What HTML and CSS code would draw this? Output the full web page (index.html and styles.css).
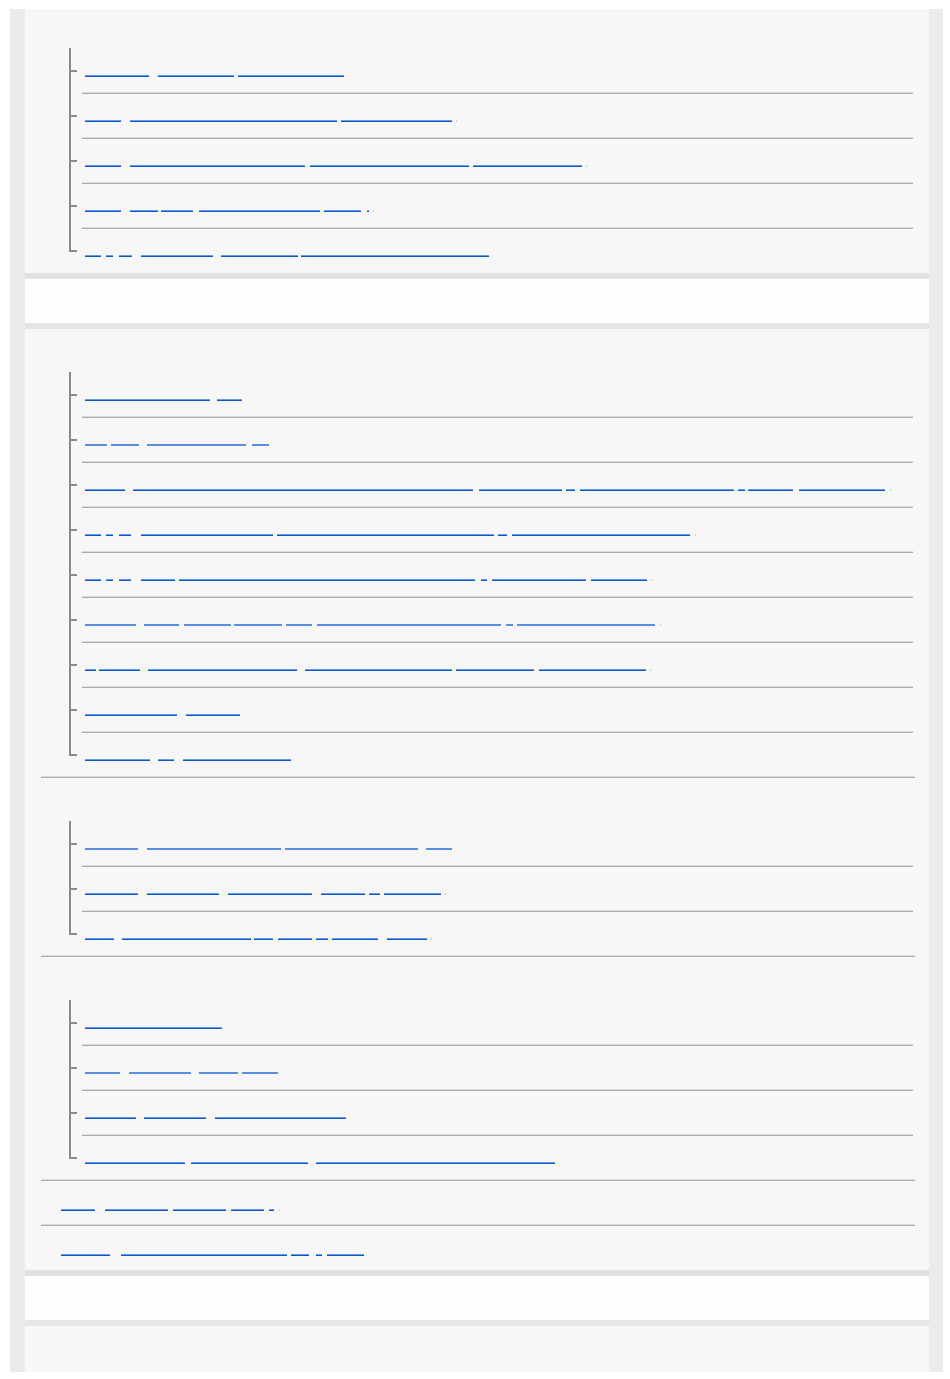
FILE: index.html
```html
<!DOCTYPE html>
<html lang="en">
<head>
<meta charset="utf-8">
<title>Help Guide</title>
<link rel="stylesheet" href="styles.css">
</head>
<body>
<div class="frame">

  <section class="sec sec-first">
    <ul class="top">
      <li class="grp grp-first">
        <div class="gh">Shooting settings</div>
        <ul class="tree">
          <li><a class="lk" href="#"><span class="s" style="width:64px">Focus</span><span class="s g9" style="width:76px">Mode</span><span class="s g4" style="width:106px">Settings</span></a></li>
          <li><a class="lk" href="#"><span class="s" style="width:36px">AF</span><span class="s g9" style="width:207px">Tracking sensitivity</span><span class="s g4" style="width:111px">Settings</span><span class="s g4 dot">.</span></a></li>
          <li><a class="lk" href="#"><span class="s" style="width:36px">Face</span><span class="s g9" style="width:175px">Detection Priority</span><span class="s g5" style="width:159px">in AF and MF</span><span class="s g4" style="width:109px">Settings</span><span class="s g4 dot">.</span></a></li>
          <li><a class="lk" href="#"><span class="s" style="width:36px">Eye</span><span class="s g9" style="width:28px">AF</span><span class="s g3" style="width:32px">Set</span><span class="s g6" style="width:121px">Subject Detection</span><span class="s g4" style="width:37px">Area</span><span class="s g6" style="width:2px">|</span><span class="s g4 dot">.</span></a></li>
          <li><a class="lk" href="#"><span class="s" style="width:16px">1</span><span class="s g5" style="width:7px">-</span><span class="s g6" style="width:13px">2</span><span class="s g9" style="width:72px">Touch</span><span class="s g8" style="width:77px">Operation</span><span class="s g3" style="width:188px">Focus Standard Settings</span></a></li>
        </ul>
      </li>
    </ul>
  </section>

  <h2 class="bar">Exposure / Color</h2>

  <section class="sec">
    <ul class="top">
      <li class="grp">
        <div class="gh">Exposure</div>
        <ul class="tree">
          <li><a class="lk" href="#"><span class="s" style="width:125px">Exposure Compensation</span><span class="s g7" style="width:25px">ISO</span></a></li>
          <li class="soft"><a class="lk" href="#"><span class="s" style="width:22px">M</span><span class="s g4" style="width:28px">Mode</span><span class="s g8" style="width:99px">Shutter Speed</span><span class="s g6" style="width:17px">Av</span></a></li>
          <li><a class="lk" href="#"><span class="s" style="width:40px">Auto</span><span class="s g8" style="width:340px">Exposure Lock with the Shutter Button Half Press</span><span class="s g6" style="width:83px">Metering</span><span class="s g4" style="width:9px">/</span><span class="s g5" style="width:154px">Spot Metering Point</span><span class="s g4" style="width:7px">-</span><span class="s g3" style="width:45px">Zone</span><span class="s g6" style="width:86px">Settings</span><span class="s g5 dot">.</span></a></li>
          <li><a class="lk" href="#"><span class="s" style="width:16px">1</span><span class="s g5" style="width:7px">-</span><span class="s g6" style="width:12px">2</span><span class="s g10" style="width:132px">Dynamic Range Optimizer</span><span class="s g4" style="width:217px">High Dynamic Range Shooting</span><span class="s g4" style="width:9px">/</span><span class="s g5" style="width:178px">HDR Settings for Still</span><span class="s g5 dot">.</span></a></li>
          <li><a class="lk" href="#"><span class="s" style="width:16px">1</span><span class="s g5" style="width:7px">-</span><span class="s g6" style="width:12px">2</span><span class="s g10" style="width:34px">Auto</span><span class="s g4" style="width:296px">Bracketing Settings for Exposure and White Balance</span><span class="s g6" style="width:6px">-</span><span class="s g5" style="width:94px">Drive Mode</span><span class="s g5" style="width:56px">Order</span><span class="s g5 dot">.</span></a></li>
          <li class="soft"><a class="lk" href="#"><span class="s" style="width:51px">Using</span><span class="s g8" style="width:35px">the</span><span class="s g5" style="width:47px">Zebra</span><span class="s g3" style="width:48px">Display</span><span class="s g4" style="width:26px">for</span><span class="s g5" style="width:184px">Exposure Level Monitoring</span><span class="s g5" style="width:7px">-</span><span class="s g4" style="width:138px">Gamma Display</span><span class="s g5 dot">.</span></a></li>
          <li><a class="lk" href="#"><span class="s" style="width:11px">P</span><span class="s g3" style="width:41px">Mode</span><span class="s g8" style="width:149px">Program Shift</span><span class="s g8" style="width:147px">Flicker-free Shots</span><span class="s g4" style="width:78px">Settings</span><span class="s g5" style="width:107px">Anti-flicker</span><span class="s g4 dot">.</span></a></li>
          <li><a class="lk" href="#"><span class="s" style="width:92px">White Balance</span><span class="s g9" style="width:54px">Shift</span></a></li>
          <li><a class="lk" href="#"><span class="s" style="width:65px">Creative</span><span class="s g8" style="width:16px">Look</span><span class="s g9" style="width:108px">Picture Profile</span></a></li>
        </ul>
      </li>
      <li class="grp">
        <div class="gh">Flash</div>
        <ul class="tree">
          <li class="soft"><a class="lk" href="#"><span class="s" style="width:53px">Using</span><span class="s g9" style="width:134px">Flash Compensation</span><span class="s g4" style="width:133px">Wireless Flash</span><span class="s g8" style="width:26px">Mode</span></a></li>
          <li><a class="lk" href="#"><span class="s" style="width:53px">Using</span><span class="s g9" style="width:72px">Red Eye</span><span class="s g9" style="width:84px">Reduction</span><span class="s g9" style="width:44px">Flash</span><span class="s g4" style="width:11px">/</span><span class="s g4" style="width:57px">Settings</span><span class="s g4 dot">.</span></a></li>
          <li><a class="lk" href="#"><span class="s" style="width:29px">Fill</span><span class="s g8" style="width:129px">Flash Exposure Lock</span><span class="s g3" style="width:19px">TTL</span><span class="s g5" style="width:34px">Rear</span><span class="s g4" style="width:12px">-</span><span class="s g4" style="width:46px">Sync</span><span class="s g9" style="width:40px">Slow</span><span class="s g4 dot">.</span></a></li>
        </ul>
      </li>
      <li class="grp">
        <div class="gh">Drive mode</div>
        <ul class="tree">
          <li><a class="lk" href="#"><span class="s" style="width:137px">Continuous Shooting</span></a></li>
          <li class="soft"><a class="lk" href="#"><span class="s" style="width:35px">Self</span><span class="s g9" style="width:62px">Timer</span><span class="s g8" style="width:39px">Cont</span><span class="s g4" style="width:36px">Brkt</span></a></li>
          <li><a class="lk" href="#"><span class="s" style="width:51px">Single</span><span class="s g8" style="width:62px">Shooting</span><span class="s g9" style="width:131px">Interval Shooting Function</span></a></li>
          <li><a class="lk" href="#"><span class="s" style="width:100px">Priority Settings</span><span class="s g6" style="width:117px">Release Settings</span><span class="s g8" style="width:239px">Continuous Shooting Speed Settings</span></a></li>
        </ul>
      </li>
      <li class="single"><a class="lk" href="#"><span class="s" style="width:34px">Using</span><span class="s g10" style="width:63px">Silent Shooting</span><span class="s g5" style="width:53px">Settings</span><span class="s g5" style="width:33px">Menu</span><span class="s g5" style="width:5px">-</span><span class="s g5 dot">.</span></a></li>
      <li class="single"><a class="lk" href="#"><span class="s" style="width:49px">Shutter</span><span class="s g11" style="width:166px">Electronic Front Curtain Shutter</span><span class="s g4" style="width:18px">and</span><span class="s g7" style="width:6px">/</span><span class="s g5" style="width:37px">Type</span></a></li>
    </ul>
  </section>

  <h2 class="bar">Movie</h2>

  <section class="sec sec-last"></section>

</div>
</body>
</html>
```

FILE: styles.css
```css
* {
  box-sizing: border-box;
  margin: 0;
  padding: 0;
}

html,
body {
  background: #ffffff;
}

body {
  padding: 9px 7px 7px 10px;
  font-family: "Noto Sans CJK JP", "Liberation Sans", sans-serif;
  font-size: 14px;
}

.frame {
  width: 933px;
  background: #ebebeb;
  padding: 0 14px 0 15px;
}

.sec {
  background: #f7f7f7;
}

.sec-last {
  height: 46px;
}

.bar {
  height: 56px;
  background: #fefefe;
  border-top: 6px solid #e1e1e1;
  border-bottom: 6px solid #e5e5e5;
  color: transparent;
  font-size: 16px;
  font-weight: normal;
  line-height: 44px;
  padding-left: 20px;
  overflow: hidden;
}

.top {
  list-style: none;
  margin: 0 14px 0 16px;
}

.top > li {
  border-bottom: 1px solid #acacac;
  box-shadow: inset 0 -1px 0 #dadada;
}

.top > li:last-child {
  border-bottom: none;
  box-shadow: none;
}

.gh {
  height: 44px;
  padding-left: 20px;
  color: transparent;
  line-height: 44px;
  white-space: nowrap;
  overflow: hidden;
}

.grp-first .gh {
  height: 40px;
}

.tree {
  list-style: none;
  margin: 0 2px 0 28px;
}

.tree > li {
  position: relative;
  height: 45px;
  margin-left: 13px;
  padding: 26px 0 0 3px;
  border-bottom: 1px solid #acacac;
  box-shadow: inset 0 -1px 0 #dadada;
}

.tree > li:last-child {
  height: 44px;
  border-bottom: none;
  box-shadow: none;
}

.tree > li::before {
  content: "";
  position: absolute;
  left: -13px;
  top: 0;
  width: 2px;
  height: 45px;
  background: #8a8a8a;
}

.tree > li:first-child::before {
  top: -1px;
  height: 46px;
}

.tree > li:last-child::before {
  height: 23px;
}

.tree > li::after {
  content: "";
  position: absolute;
  left: -13px;
  top: 21px;
  width: 8px;
  height: 2px;
  background: #8a8a8a;
}

.single {
  height: 45px;
  padding: 28px 0 0 20px;
}

.top > li.single:last-child {
  height: 44px;
}

.lk {
  display: flex;
  height: 2px;
  text-decoration: none;
}

.s {
  display: block;
  flex: none;
  height: 2px;
  overflow: hidden;
  white-space: nowrap;
  color: transparent;
  font-size: 2px;
  line-height: 2px;
  background: linear-gradient(#6a9ae0 50%, #0a57c9 50%);
}

.soft .s {
  background: #5a90db;
}

.s.dot {
  width: 1px;
  background: #b9cdee;
}

.g3 { margin-left: 3px; }
.g4 { margin-left: 4px; }
.g5 { margin-left: 5px; }
.g6 { margin-left: 6px; }
.g7 { margin-left: 7px; }
.g8 { margin-left: 8px; }
.g9 { margin-left: 9px; }
.g10 { margin-left: 10px; }
.g11 { margin-left: 11px; }
```
